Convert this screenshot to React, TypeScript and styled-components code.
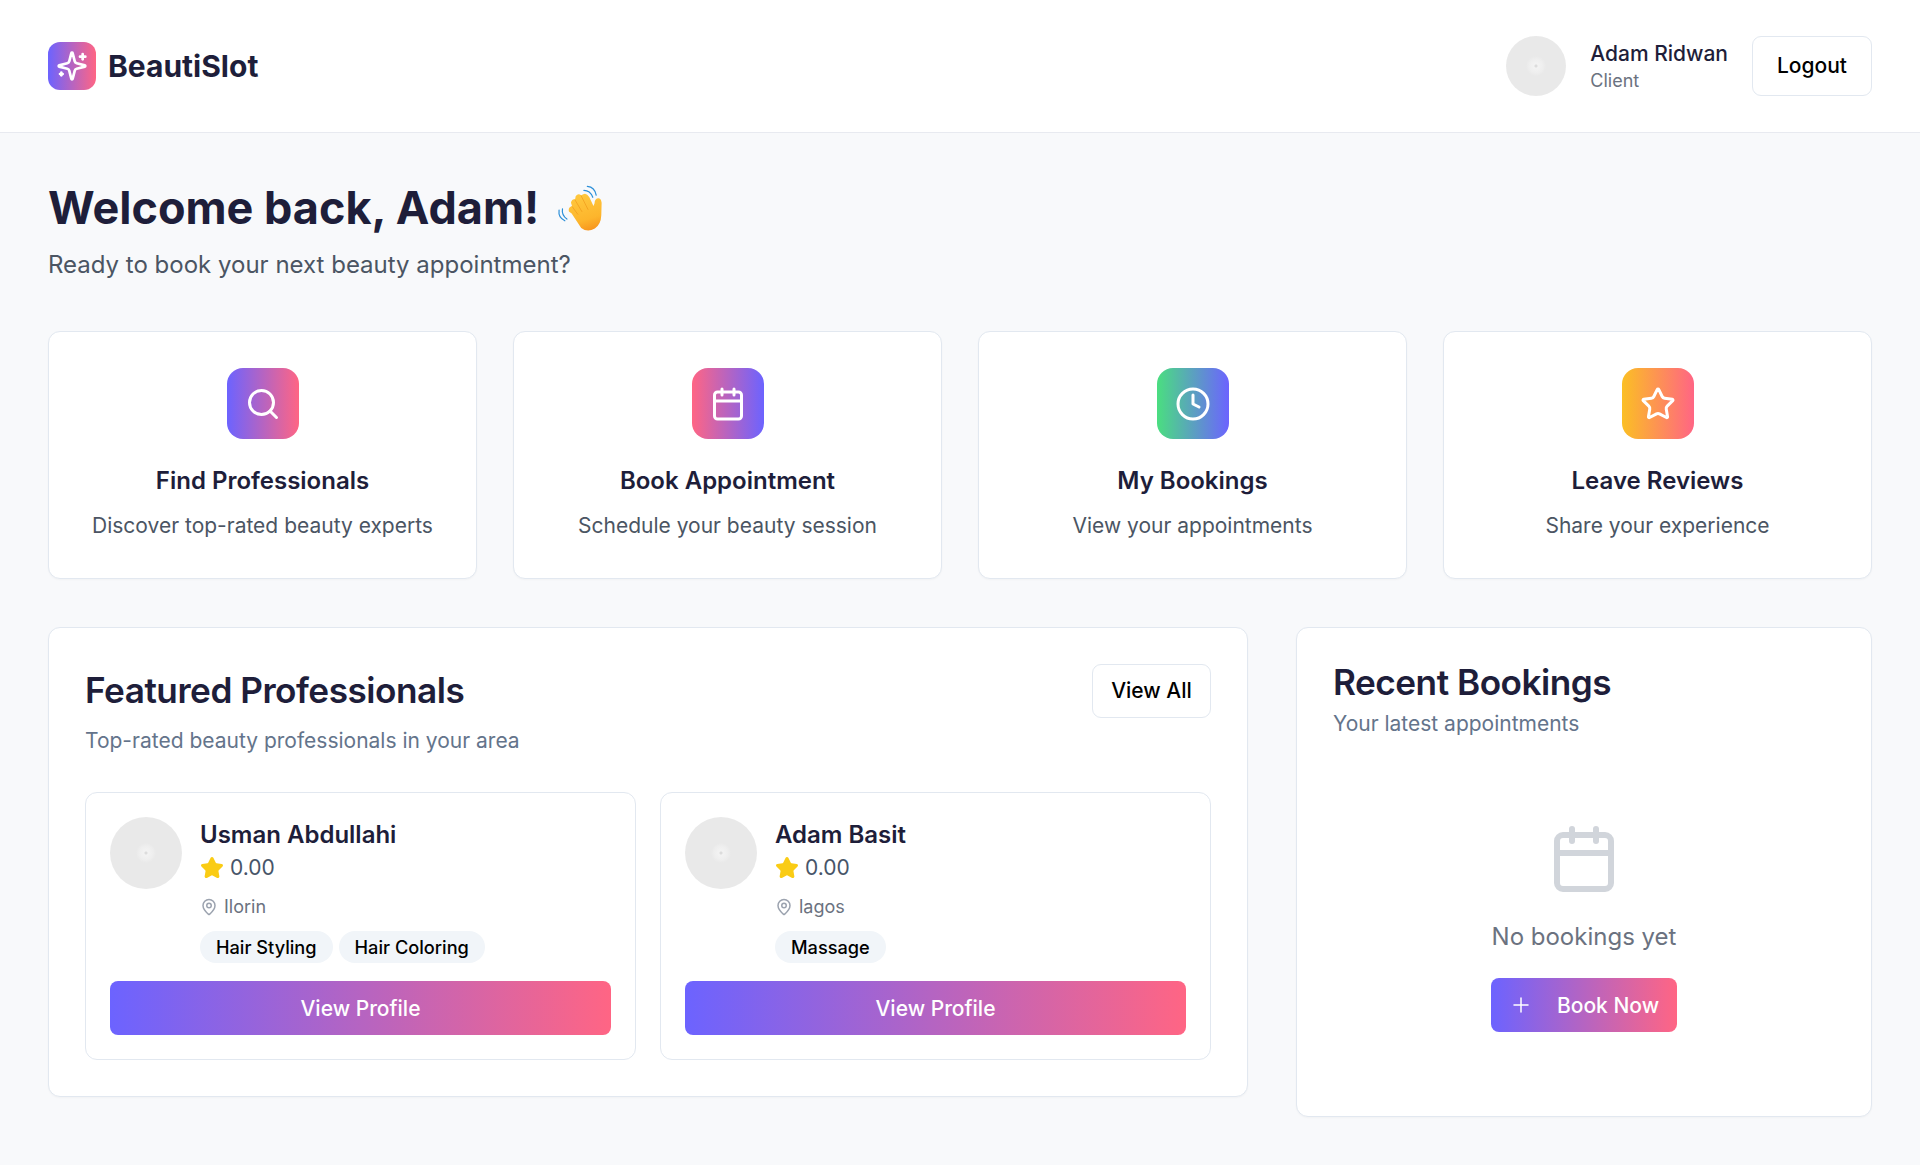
import React from "react";
import styled, { createGlobalStyle } from "styled-components";
import { Calendar, Clock, MapPin, Plus, Search, Star } from "lucide-react";

const GlobalStyle = createGlobalStyle`
  * {
    box-sizing: border-box;
  }

  body {
    margin: 0;
    background: #f8f9fb;
    color: #1e1e3a;
    font-family: Inter, "Noto Sans", sans-serif;
  }
`;

const brand = "linear-gradient(90deg, #6c63ff, #ff6584)";

const Header = styled.header`
  display: flex;
  align-items: center;
  justify-content: space-between;
  height: 133px;
  padding: 0 48px;
  background: #fff;
  border-bottom: 1px solid #e8eaf0;
`;

const Logo = styled.div`
  display: flex;
  align-items: center;
  gap: 12px;
  font-size: 30px;
  font-weight: 700;
`;

const LogoMark = styled.div`
  display: flex;
  align-items: center;
  justify-content: center;
  width: 48px;
  height: 48px;
  border-radius: 12px;
  background: ${brand};
  color: #fff;
`;

const UserArea = styled.div`
  display: flex;
  align-items: center;
  gap: 24px;
`;

const Avatar = styled.div<{ $size: number }>`
  flex-shrink: 0;
  width: ${(p) => p.$size}px;
  height: ${(p) => p.$size}px;
  border-radius: 50%;
  background: radial-gradient(circle, #dcdcdc 0 1px, #f2f2f2 2px 3px, #eeeeee 7px, #e9e9e9 10px);
`;

const UserText = styled.div`
  display: flex;
  flex-direction: column;
`;

const UserName = styled.span`
  font-size: 21px;
  line-height: 28px;
  font-weight: 500;
`;

const UserRole = styled.span`
  margin-top: 1px;
  font-size: 18px;
  line-height: 24px;
  color: #6b7280;
`;

const OutlineButton = styled.button<{ $h: number; $w: number }>`
  width: ${(p) => p.$w}px;
  height: ${(p) => p.$h}px;
  padding: 0 0 1px;
  background: #fff;
  border: 1px solid #e2e8f0;
  border-radius: 9px;
  color: #000;
  font-family: inherit;
  font-size: 21px;
  font-weight: 500;
`;

const Main = styled.main`
  padding: 48px;
`;

const Title = styled.h1`
  display: flex;
  align-items: center;
  gap: 17px;
  margin: 0;
  font-size: 45px;
  line-height: 54px;
  font-weight: 700;
`;

const Wave = styled.svg`
  width: 47px;
  height: 47px;
  flex-shrink: 0;
`;

const Subtitle = styled.p`
  margin: 14px 0 0;
  font-size: 24px;
  line-height: 32px;
  color: #4b5563;
`;

const ActionGrid = styled.section`
  display: grid;
  grid-template-columns: repeat(4, 1fr);
  gap: 36px;
  margin-top: 50px;
`;

const Panel = styled.div`
  background: #fff;
  border: 1px solid #e2e8f0;
  border-radius: 12px;
  box-shadow: 0 1px 2px rgba(0, 0, 0, 0.03);
`;

const ActionCard = styled(Panel)`
  display: flex;
  flex-direction: column;
  align-items: center;
  height: 248px;
  padding: 36px;
`;

const ActionIcon = styled.div<{ $bg: string }>`
  display: flex;
  align-items: center;
  justify-content: center;
  width: 72px;
  height: 72px;
  border-radius: 16px;
  background: ${(p) => p.$bg};
  color: #fff;
`;

const ActionTitle = styled.h3`
  margin: 26px 0 0;
  font-size: 24px;
  line-height: 32px;
  font-weight: 600;
`;

const ActionText = styled.p`
  margin: 13px 0 0;
  font-size: 21px;
  line-height: 32px;
  color: #4b5563;
`;

const Columns = styled.section`
  display: grid;
  grid-template-columns: 1200px 576px;
  gap: 48px;
  align-items: start;
  margin-top: 48px;
`;

const FeaturedPanel = styled(Panel)`
  padding: 36px;
`;

const PanelHead = styled.div`
  display: flex;
  align-items: flex-start;
  justify-content: space-between;
`;

const PanelTitle = styled.h2<{ $line: number }>`
  margin: 0;
  font-size: 35.2px;
  line-height: ${(p) => p.$line}px;
  font-weight: 600;
  letter-spacing: -0.5px;
`;

const PanelText = styled.p<{ $top: number }>`
  margin: ${(p) => p.$top}px 0 0;
  font-size: 21px;
  line-height: 28px;
  color: #64748b;
`;

const ProGrid = styled.div`
  display: grid;
  grid-template-columns: 1fr 1fr;
  gap: 24px;
  margin-top: 37px;
`;

const ProCard = styled(Panel)`
  padding: 24px;
  box-shadow: none;
`;

const ProTop = styled.div`
  display: flex;
  gap: 18px;
`;

const ProName = styled.div`
  font-size: 24px;
  line-height: 36px;
  font-weight: 600;
`;

const Rating = styled.div`
  display: flex;
  align-items: center;
  gap: 6px;
  font-size: 21px;
  line-height: 30px;
  color: #475569;
`;

const Location = styled.div`
  display: flex;
  align-items: center;
  gap: 6px;
  margin-top: 10px;
  font-size: 18px;
  line-height: 28px;
  color: #6b7280;
`;

const Tags = styled.div`
  display: flex;
  gap: 6px;
  margin-top: 10px;
`;

const Tag = styled.span`
  height: 32px;
  padding: 0 16px;
  border-radius: 16px;
  background: #f1f5f9;
  color: #000;
  font-size: 18.2px;
  line-height: 32px;
  font-weight: 500;
`;

const GradientButton = styled.button`
  display: flex;
  align-items: center;
  justify-content: center;
  height: 54px;
  border: 0;
  border-radius: 8px;
  background: ${brand};
  color: #fff;
  font-family: inherit;
  font-size: 21px;
  font-weight: 500;
`;

const ProfileButton = styled(GradientButton)`
  width: 100%;
  margin-top: 18px;
`;

const BookButton = styled(GradientButton)`
  gap: 24px;
  padding: 0 18px;
  margin-top: 25px;
`;

const BookingsPanel = styled(Panel)`
  height: 490px;
  padding: 36px;
`;

const EmptyState = styled.div`
  display: flex;
  flex-direction: column;
  align-items: center;
  margin-top: 85px;
  color: #d1d5db;
`;

const EmptyText = styled.p`
  margin: 26px 0 0;
  font-size: 24px;
  line-height: 32px;
  color: #6b7280;
`;

const SparkleIcon = () => (
  <svg width="32" height="32" viewBox="0 0 24 24" fill="none" stroke="currentColor" strokeWidth="2" strokeLinecap="round" strokeLinejoin="round">
    <path d="M9.937 15.5A2 2 0 0 0 8.5 14.063l-6.135-1.582a.5.5 0 0 1 0-.962L8.5 9.936A2 2 0 0 0 9.937 8.5l1.582-6.135a.5.5 0 0 1 .963 0L14.063 8.5A2 2 0 0 0 15.5 9.937l6.135 1.581a.5.5 0 0 1 0 .964L15.5 14.063a2 2 0 0 0-1.437 1.437l-1.582 6.135a.5.5 0 0 1-.963 0z" />
    <path d="M20 3v4" />
    <path d="M22 5h-4" />
    <path d="M4 17v2" />
    <path d="M5 18H3" />
  </svg>
);

const WaveIcon = () => (
  <Wave viewBox="78 46 138 138" role="img" aria-label="waving hand">
    <defs>
      <linearGradient id="hand" gradientUnits="userSpaceOnUse" x1="140" y1="70" x2="175" y2="182">
        <stop offset="0" stopColor="#ffc93f" />
        <stop offset="0.7" stopColor="#fdb52c" />
        <stop offset="1" stopColor="#f7941d" />
      </linearGradient>
    </defs>
    <g fill="none" stroke="#2b8fd8" strokeWidth="3.5" strokeLinecap="round">
      <path d="M160 62 Q178 62 186 82" />
      <path d="M170 50 Q192 52 196 76" />
      <path d="M97 116 Q94 134 110 146" />
      <path d="M87 120 Q84 142 104 151" />
    </g>
    <path fill="url(#hand)" d="M124 130 L152 172 Q170 186 192 174 Q210 162 211 135 L212 98 Q210 84 201 85 Q192 86 191 100 L188 108 L176 82 Q168 68 158 73 L152 76 Q143 70 136 78 L134 88 Q124 86 122 98 L125 108 Q113 112 116 124 Z" />
    <g fill="none" stroke="#ef9a1a" strokeWidth="2" strokeLinecap="round">
      <path d="M134 90 L154 124" />
      <path d="M152 78 L172 118" />
      <path d="M126 110 L142 132" />
    </g>
  </Wave>
);

const actions = [
  { title: "Find Professionals", text: "Discover top-rated beauty experts", icon: Search, bg: "linear-gradient(90deg, #6c63ff, #ff6584)" },
  { title: "Book Appointment", text: "Schedule your beauty session", icon: Calendar, bg: "linear-gradient(90deg, #ff6584, #6c63ff)" },
  { title: "My Bookings", text: "View your appointments", icon: Clock, bg: "linear-gradient(90deg, #4ade80, #6c63ff)" },
  { title: "Leave Reviews", text: "Share your experience", icon: Star, bg: "linear-gradient(90deg, #fbbf24, #ff6584)" },
];

const pros = [
  { name: "Usman Abdullahi", city: "Ilorin", tags: ["Hair Styling", "Hair Coloring"] },
  { name: "Adam Basit", city: "lagos", tags: ["Massage"] },
];

export default function App() {
  return (
    <>
      <GlobalStyle />
      <Header>
        <Logo>
          <LogoMark>
            <SparkleIcon />
          </LogoMark>
          BeautiSlot
        </Logo>
        <UserArea>
          <Avatar $size={60} />
          <UserText>
            <UserName>Adam Ridwan</UserName>
            <UserRole>Client</UserRole>
          </UserText>
          <OutlineButton $w={120} $h={60}>Logout</OutlineButton>
        </UserArea>
      </Header>
      <Main>
        <Title>Welcome back, Adam! <WaveIcon /></Title>
        <Subtitle>Ready to book your next beauty appointment?</Subtitle>
        <ActionGrid>
          {actions.map((a) => (
            <ActionCard key={a.title}>
              <ActionIcon $bg={a.bg}>
                <a.icon size={36} />
              </ActionIcon>
              <ActionTitle>{a.title}</ActionTitle>
              <ActionText>{a.text}</ActionText>
            </ActionCard>
          ))}
        </ActionGrid>
        <Columns>
          <FeaturedPanel>
            <PanelHead>
              <div>
                <PanelTitle $line={52}>Featured Professionals</PanelTitle>
                <PanelText $top={11}>Top-rated beauty professionals in your area</PanelText>
              </div>
              <OutlineButton $w={119} $h={54}>View All</OutlineButton>
            </PanelHead>
            <ProGrid>
              {pros.map((p) => (
                <ProCard key={p.name}>
                  <ProTop>
                    <Avatar $size={72} />
                    <div>
                      <ProName>{p.name}</ProName>
                      <Rating>
                        <Star size={24} fill="#facc15" color="#facc15" />
                        0.00
                      </Rating>
                      <Location>
                        <MapPin size={18} color="#9ca3af" />
                        {p.city}
                      </Location>
                      <Tags>
                        {p.tags.map((t) => (
                          <Tag key={t}>{t}</Tag>
                        ))}
                      </Tags>
                    </div>
                  </ProTop>
                  <ProfileButton>View Profile</ProfileButton>
                </ProCard>
              ))}
            </ProGrid>
          </FeaturedPanel>
          <BookingsPanel>
            <PanelTitle $line={36}>Recent Bookings</PanelTitle>
            <PanelText $top={10}>Your latest appointments</PanelText>
            <EmptyState>
              <Calendar size={72} />
              <EmptyText>No bookings yet</EmptyText>
              <BookButton>
                <Plus size={24} strokeWidth={1.5} />
                Book Now
              </BookButton>
            </EmptyState>
          </BookingsPanel>
        </Columns>
      </Main>
    </>
  );
}
